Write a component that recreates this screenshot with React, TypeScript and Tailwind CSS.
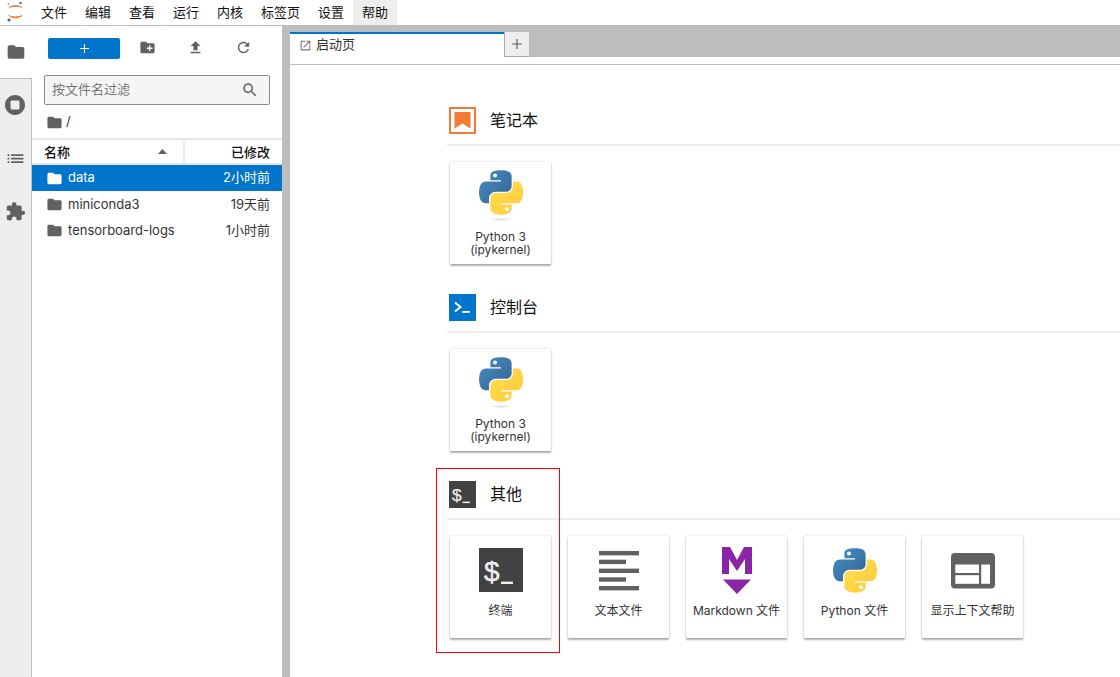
import React from "react";

const P = {
  folder: "M10 4H4c-1.1 0-2 .9-2 2v12c0 1.1.9 2 2 2h16c1.1 0 2-.9 2-2V8c0-1.1-.9-2-2-2h-8l-2-2z",
  newFolder: "M20 6h-8l-2-2H4c-1.11 0-2 .89-2 2v12c0 1.11.89 2 2 2h16c1.11 0 2-.89 2-2V8c0-1.11-.89-2-2-2zm-1 8h-3v3h-2v-3h-3v-2h3V9h2v3h3v2z",
  upload: "M9 16h6v-6h4l-7-7-7 7h4zm-4 2h14v2H5z",
  refresh: "M17.65 6.35C16.2 4.9 14.21 4 12 4c-4.42 0-7.99 3.58-7.99 8s3.57 8 7.99 8c3.73 0 6.84-2.55 7.73-6h-2.08c-.82 2.33-3.04 4-5.65 4-3.31 0-6-2.69-6-6s2.69-6 6-6c1.66 0 3.14.69 4.22 1.78L13 11h7V4l-2.35 2.35z",
  stop: "M12 2C6.48 2 2 6.48 2 12s4.48 10 10 10 10-4.48 10-10S17.52 2 12 2zm4.5 13c0 .83-.67 1.5-1.5 1.5H9c-.83 0-1.5-.67-1.5-1.5V9c0-.83.67-1.5 1.5-1.5h6c.83 0 1.5.67 1.5 1.5v6z",
  list: "M3 13h2v-2H3v2zm0 4h2v-2H3v2zm0-8h2V7H3v2zm4 4h14v-2H7v2zm0 4h14v-2H7v2zM7 7v2h14V7H7z",
  ext: "M20.5 11H19V7c0-1.1-.9-2-2-2h-4V3.5C13 2.12 11.88 1 10.5 1S8 2.12 8 3.5V5H4c-1.1 0-1.99.9-1.99 2v3.8H3.5c1.49 0 2.7 1.21 2.7 2.7s-1.21 2.7-2.7 2.7H2V20c0 1.1.9 2 2 2h3.8v-1.5c0-1.49 1.21-2.7 2.7-2.7 1.49 0 2.7 1.21 2.7 2.7V22H17c1.1 0 2-.9 2-2v-4h1.5c1.38 0 2.5-1.12 2.5-2.5S21.88 11 20.5 11z",
  search: "M15.5 14h-.79l-.28-.27C15.41 12.59 16 11.11 16 9.5 16 5.91 13.09 3 9.5 3S3 5.91 3 9.5 5.91 16 9.5 16c1.61 0 3.09-.59 4.23-1.57l.27.28v.79l5 4.99L20.49 19l-4.99-5zm-6 0C7.01 14 5 11.99 5 9.5S7.01 5 9.5 5 14 7.01 14 9.5 11.99 14 9.5 14z",
  launch: "M19 19H5V5h7V3H5c-1.11 0-2 .9-2 2v14c0 1.1.89 2 2 2h14c1.1 0 2-.9 2-2v-7h-2v7zM14 3v2h3.59l-9.83 9.83 1.41 1.41L19 6.41V10h2V3h-7z",
};

function Ic({ d, className }: { d: string; className: string }) {
  return (
    <svg viewBox="0 0 24 24" className={className} fill="currentColor">
      <path d={d} />
    </svg>
  );
}

function JupyterLogo() {
  return (
    <svg viewBox="0 0 32 25" className="w-[32px] h-[25px]">
      <path d="M8 8.5 C10.5 4.2 20.5 4.2 23 8.5 C20 6.6 11 6.6 8 8.5Z" fill="#f37726" />
      <path d="M8 14.5 C11 17 20 17 23 14.5 C20.5 19.6 10.5 19.6 8 14.5Z" fill="#f37726" />
      <circle cx="20.5" cy="3" r="1.3" fill="#767677" />
      <circle cx="9" cy="20" r="1.6" fill="#616262" />
      <circle cx="8.5" cy="4" r="0.9" fill="#9e9e9e" />
    </svg>
  );
}

function PythonLogo({ shadow, className }: { shadow?: boolean; className: string }) {
  const id = shadow ? "k" : "f";
  return (
    <svg viewBox="0 0 111 130" className={className}>
      <defs>
        <linearGradient id={"b" + id} x1="0" y1="0" x2="1" y2="1">
          <stop offset="0" stopColor="#4a8ec4" />
          <stop offset="1" stopColor="#2f6491" />
        </linearGradient>
        <linearGradient id={"y" + id} x1="0" y1="0" x2="1" y2="1">
          <stop offset="0" stopColor="#ffe052" />
          <stop offset="1" stopColor="#ffc836" />
        </linearGradient>
        <radialGradient id={"s" + id}>
          <stop offset="0" stopColor="#000" stopOpacity="0.14" />
          <stop offset="1" stopColor="#000" stopOpacity="0" />
        </radialGradient>
      </defs>
      <path
        fill={`url(#b${id})`}
        fillRule="evenodd"
        d="M54.919,0.001C50.335,0.022 45.958,0.413 42.106,1.095C30.757,3.099 28.697,7.295 28.697,15.032L28.697,25.25L55.515,25.25L55.515,28.656L18.632,28.656C10.838,28.656 4.013,33.341 1.878,42.254C-0.585,52.471 -0.694,58.846 1.878,69.504C3.785,77.438 8.339,83.088 16.133,83.088L25.354,83.088L25.354,70.834C25.354,61.981 33.014,54.172 42.106,54.172L68.894,54.172C76.351,54.172 82.303,48.033 82.303,40.544L82.303,15.032C82.303,7.762 76.17,2.299 68.894,1.095C64.288,0.328 59.509,-0.02 54.919,0.001Z M40.416,8.22C43.186,8.22 45.448,10.519 45.448,13.345C45.448,16.161 43.186,18.439 40.416,18.439C37.636,18.439 35.385,16.161 35.385,13.345C35.385,10.519 37.636,8.22 40.416,8.22Z"
      />
      <path
        fill={`url(#y${id})`}
        fillRule="evenodd"
        d="M85.639,28.656L85.639,40.563C85.639,49.796 77.813,57.563 68.894,57.563L42.106,57.563C34.768,57.563 28.697,63.841 28.697,71.188L28.697,96.719C28.697,103.985 35.02,108.26 42.106,110.344C50.592,112.839 58.729,113.29 68.894,110.344C75.651,108.388 82.303,104.451 82.303,96.719L82.303,86.5L55.515,86.5L55.515,83.088L95.71,83.088C103.504,83.088 106.408,77.652 109.12,69.504C111.921,61.116 111.802,53.05 109.12,42.254C107.192,34.481 103.511,28.656 95.71,28.656L85.639,28.656Z M70.573,93.313C73.353,93.313 75.605,95.591 75.605,98.407C75.605,101.233 73.353,103.532 70.573,103.532C67.803,103.532 65.542,101.233 65.542,98.407C65.542,95.591 67.803,93.313 70.573,93.313Z"
      />
      {shadow && <ellipse cx="55" cy="124" rx="30" ry="5" fill={`url(#s${id})`} />}
    </svg>
  );
}

function TerminalIcon({ className }: { className: string }) {
  return (
    <svg viewBox="0 0 44 44" className={className}>
      <rect width="44" height="44" fill="#424242" />
      <text x="5" y="33" fontSize="28" fill="#eeeeee" stroke="#eeeeee" strokeWidth="0.4" fontFamily="'Liberation Sans', sans-serif">$</text>
      <rect x="22" y="33.6" width="12" height="2.4" fill="#eeeeee" />
    </svg>
  );
}

function TextIcon() {
  return (
    <svg viewBox="0 0 40 40" className="w-[40px] h-[40px]" fill="#616161">
      <rect x="0" y="0" width="40" height="4.4" />
      <rect x="0" y="8.7" width="27" height="4.4" />
      <rect x="0" y="17.6" width="40" height="4.4" />
      <rect x="0" y="26.3" width="27" height="4.4" />
      <rect x="0" y="35" width="40" height="4.4" />
    </svg>
  );
}

function MarkdownIcon() {
  return (
    <svg viewBox="0 0 30 47" className="w-[30px] h-[47px]" fill="#8a25a8">
      <path d="M0 0H8L15 13L22 0H30V27H23V12L15 24L7 12V27H0Z" />
      <path d="M1 32.5H29L15 47Z" />
    </svg>
  );
}

function HelpIcon() {
  return (
    <svg viewBox="0 0 44 36" className="w-[44px] h-[36px]">
      <rect width="44" height="35.5" rx="4" fill="#616161" />
      <rect x="4.3" y="11.5" width="23.7" height="8.5" fill="#fff" />
      <rect x="4.3" y="22.2" width="23.7" height="8.6" fill="#fff" />
      <rect x="30.2" y="11.5" width="8.8" height="19.3" fill="#fff" />
    </svg>
  );
}

function Card({ label, children, iconClass }: { label: React.ReactNode; children: React.ReactNode; iconClass: string }) {
  return (
    <div className="w-[101px] h-[102px] bg-white flex flex-col items-center shadow-[0_2px_2px_0_rgba(0,0,0,0.3),0_0_2px_0_rgba(0,0,0,0.2)] rounded-[1px]">
      <div className={"h-[68px] w-full flex justify-center items-start " + iconClass}>{children}</div>
      <div className="text-[12px] leading-[13px] text-center text-[#333333] whitespace-nowrap">{label}</div>
    </div>
  );
}

function Section({ icon, title, children }: { icon: React.ReactNode; title: string; children: React.ReactNode }) {
  return (
    <section className="mb-[30px]">
      <div className="flex items-start box-content h-[27px] pb-[10px] pl-[2px] border-b-2 border-[#eeeeee]">
        <div className="w-[27px] h-[27px]">{icon}</div>
        <h2 className="ml-[14px] text-[16px] text-[#111111] leading-[27px]">{title}</h2>
      </div>
      <div className="flex gap-[17px] pl-[3px] pt-[16px]">{children}</div>
    </section>
  );
}

const menus = ["文件", "编辑", "查看", "运行", "内核", "标签页", "设置", "帮助"];
const files = [
  { n: "data", d: "2小时前", s: true },
  { n: "miniconda3", d: "19天前", s: false },
  { n: "tensorboard-logs", d: "1小时前", s: false },
];

export default function App() {
  return (
    <div
      className="relative w-[1120px] h-[677px] overflow-hidden bg-white flex flex-col text-[#222222]"
      style={{ fontFamily: "Inter, 'Noto Sans CJK SC', sans-serif" }}
    >
      <header className="h-[25px] shrink-0 flex bg-white">
        <div className="w-[32px]">
          <JupyterLogo />
        </div>
        {menus.map((m) => (
          <div
            key={m}
            className={
              "px-[9px] text-[13px] leading-[24px] text-[#111111] " + (m === "帮助" ? "bg-[#eeeeee]" : "")
            }
          >
            {m}
          </div>
        ))}
      </header>

      <div className="flex-1 flex min-h-0 border-t border-[#bdbdbd]">
        <nav className="w-[32px] shrink-0 flex flex-col">
          <div className="h-[52px] bg-white flex justify-center pt-[16px] pr-[1px]">
            <Ic d={P.folder} className="w-[20px] h-[20px] text-[#616161]" />
          </div>
          <div className="flex-1 bg-[#eeeeee] border-t border-r border-[#bdbdbd] flex flex-col items-center pr-[1px] pt-[14px] gap-[31px]">
            <Ic d={P.stop} className="w-[24px] h-[24px] text-[#616161]" />
            <Ic d={P.list} className="w-[21px] h-[21px] text-[#616161]" />
            <Ic d={P.ext} className="w-[21px] h-[21px] text-[#616161] mt-[1px]" />
          </div>
        </nav>

        <aside className="w-[250px] shrink-0 flex flex-col bg-white">
          <div className="h-[49px] shrink-0 flex items-start pt-[12px] pl-[16px]">
            <div className="w-[72px] h-[21px] bg-[#0174cb] rounded-[2px] flex items-center justify-center">
              <svg viewBox="0 0 10 10" className="w-[9px] h-[9px]">
                <path d="M4.4 0h1.2v4.4H10v1.2H5.6V10H4.4V5.6H0V4.4h4.4z" fill="#fff" />
              </svg>
            </div>
            <div className="flex w-[144px] ml-[3px] mt-[1px]">
              <div className="w-[48px] flex justify-center">
                <Ic d={P.newFolder} className="w-[17px] h-[17px] text-[#616161]" />
              </div>
              <div className="w-[48px] flex justify-center">
                <Ic d={P.upload} className="w-[17px] h-[17px] text-[#616161]" />
              </div>
              <div className="w-[48px] flex justify-center">
                <Ic d={P.refresh} className="w-[17px] h-[17px] text-[#616161]" />
              </div>
            </div>
          </div>

          <div className="mx-[12px] w-[226px] h-[30px] shrink-0 border border-[#8a8a8a] rounded-[2px] bg-[#f5f5f5] flex items-center justify-between pl-[7px] pr-[10px]">
            <span className="text-[13px] text-[#757575]">按文件名过滤</span>
            <Ic d={P.search} className="w-[18px] h-[18px] text-[#616161]" />
          </div>

          <div className="h-[33px] shrink-0 flex items-center pl-[14px] pt-[1px] gap-[3px]">
            <Ic d={P.folder} className="w-[17px] h-[17px] text-[#616161]" />
            <span className="text-[13px] text-[#333333]">/</span>
          </div>

          <div className="h-[27px] shrink-0 border-t-2 border-b-2 border-[#e6e6e6] flex items-center text-[13px] font-medium text-[#111111]">
            <div className="w-[153px] h-full flex items-center justify-between pl-[12px] pr-[16px] pt-[2px] border-r-2 border-[#eeeeee]">
              <span>名称</span>
              <svg viewBox="0 0 9 5" className="w-[9px] h-[5px] mb-[3px]">
                <path d="M4.5 0L9 5H0z" fill="#616161" />
              </svg>
            </div>
            <div className="flex-1 text-right pr-[12px] pt-[2px]">已修改</div>
          </div>

          <div className="flex flex-col">
            {files.map((f) => (
              <div
                key={f.n}
                className={
                  "h-[26.3px] flex items-center pl-[14px] pr-[12px] text-[13px] " +
                  (f.s ? "bg-[#0174cb] text-white" : "text-[#333333]")
                }
              >
                <Ic d={P.folder} className={"w-[17px] h-[17px] " + (f.s ? "text-white" : "text-[#616161]")} />
                <span className="ml-[5px] flex-1">{f.n}</span>
                <span>{f.d}</span>
              </div>
            ))}
          </div>
        </aside>

        <div className="w-[8px] shrink-0 bg-[#bdbdbd]" />

        <main className="flex-1 min-w-0 flex flex-col">
          <div className="h-[31px] shrink-0 bg-[#bdbdbd] flex items-end">
            <div className="w-[214px] h-[25px] bg-white border-t-2 border-[#0174cb] flex items-center pl-[9px] pb-[1px] gap-[4px]">
              <Ic d={P.launch} className="w-[13px] h-[13px] text-[#757575]" />
              <span className="text-[13px] text-[#333333]">启动页</span>
            </div>
            <div className="w-[25px] h-[25px] bg-[#eeeeee] border-l border-b border-[#a8a8a8] flex items-center justify-center">
              <svg viewBox="0 0 10 10" className="w-[10px] h-[10px]">
                <path d="M4.4 0h1.2v4.4H10v1.2H5.6V10H4.4V5.6H0V4.4h4.4z" fill="#616161" />
              </svg>
            </div>
          </div>
          <div className="h-[8px] shrink-0 bg-white border-b border-[#bdbdbd]" />

          <div className="flex-1 min-h-0 overflow-hidden pl-[157px] pt-[42px]">
            <Section
              title="笔记本"
              icon={
                <svg viewBox="0 0 27 27" className="w-[27px] h-[27px]">
                  <rect x="1" y="1" width="25" height="25" fill="#fff" stroke="#f47b33" strokeWidth="2" />
                  <path d="M5.5 5H21.5V21.5L13.5 16.5L5.5 21.5Z" fill="#f47b33" />
                </svg>
              }
            >
              <Card iconClass="pt-[8px]" label={<>Python 3<br />(ipykernel)</>}>
                <PythonLogo shadow className="w-[44px] h-[52px]" />
              </Card>
            </Section>

            <Section
              title="控制台"
              icon={
                <svg viewBox="0 0 27 27" className="w-[27px] h-[27px]">
                  <rect width="27" height="27" fill="#0174cb" />
                  <path d="M6 8.5L11.5 13L6 17.5" fill="none" stroke="#fff" strokeWidth="2" />
                  <rect x="13" y="17" width="8" height="1.8" fill="#fff" />
                </svg>
              }
            >
              <Card iconClass="pt-[8px]" label={<>Python 3<br />(ipykernel)</>}>
                <PythonLogo shadow className="w-[44px] h-[52px]" />
              </Card>
            </Section>

            <Section title="其他" icon={<TerminalIcon className="w-[27px] h-[27px]" />}>
              <Card iconClass="pt-[12px]" label="终端">
                <TerminalIcon className="w-[44px] h-[44px]" />
              </Card>
              <Card iconClass="pt-[15px]" label="文本文件">
                <TextIcon />
              </Card>
              <Card iconClass="pt-[11px]" label="Markdown 文件">
                <MarkdownIcon />
              </Card>
              <Card iconClass="pt-[12px]" label="Python 文件">
                <PythonLogo className="w-[44px] h-[52px]" />
              </Card>
              <Card iconClass="pt-[17px]" label="显示上下文帮助">
                <HelpIcon />
              </Card>
            </Section>
          </div>
        </main>
      </div>

      <div className="absolute left-[436px] top-[468px] w-[124px] h-[185px] border border-[#ff0000] pointer-events-none" />
    </div>
  );
}
